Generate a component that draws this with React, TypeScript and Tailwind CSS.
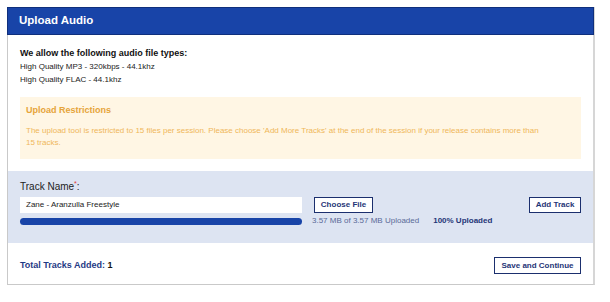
import React from "react";

export default function App() {
  const font = { fontFamily: '"Liberation Sans", Arial, sans-serif' };
  return (
    <div className="w-[610px] h-[302px] bg-white overflow-hidden" style={font}>
      <div className="ml-[7px] mt-[7px] w-[588px] border border-[#c9c9c9] border-t-0 border-r-2 border-r-[#d6d6d6]">
        <div className="h-[28px] bg-[#1844a8] border border-[#0f2f7c] -mx-px flex items-center px-[11px]">
          <span className="text-white font-bold text-[11.5px] leading-none">Upload Audio</span>
        </div>
        <div className="px-[12px] pt-[11px] pb-[12px]">
          <div className="text-[9px] font-bold leading-[14px] text-[#111]">We allow the following audio file types:</div>
          <div className="text-[8px] leading-[13px] text-[#222]">High Quality MP3 - 320kbps - 44.1khz</div>
          <div className="text-[8px] leading-[13px] text-[#222]">High Quality FLAC - 44.1khz</div>
          <div className="mt-[11px] bg-[#fff6e4] px-[6px] pt-[6px] pb-[10px]">
            <div className="text-[9px] font-bold leading-[14px] text-[#e6a43a]">Upload Restrictions</div>
            <div className="mt-[8px] text-[8px] leading-[12px] text-[#efb65a] whitespace-nowrap">
              The upload tool is restricted to 15 files per session. Please choose 'Add More Tracks' at the end of the session if your release contains more than
              <br />
              15 tracks.
            </div>
          </div>
        </div>
        <div className="bg-[#dde4f2] px-[12px] pt-[9px] pb-[16px]">
          <div className="text-[10px] leading-[14px] text-[#222]">
            Track Name<span className="text-[#e03a3a] text-[7px] align-top leading-none">*</span>:
          </div>
          <div className="mt-[3px] flex items-center">
            <div className="w-[282px] h-[16px] bg-white flex items-center px-[6px] text-[8px] text-[#222]">
              Zane - Aranzulla Freestyle
            </div>
            <div className="ml-[12px] h-[16px] w-[59px] border border-[#1b2f6e] bg-white flex items-center justify-center text-[8px] font-bold text-[#1f3577]">
              Choose File
            </div>
            <div className="ml-auto h-[16px] w-[52px] border border-[#1b2f6e] bg-white flex items-center justify-center text-[8px] font-bold text-[#1f3577]">
              Add Track
            </div>
          </div>
          <div className="mt-[2px] flex items-center">
            <div className="w-[282px] h-[7px] rounded-full bg-[#1844a8]" />
            <div className="ml-[10px] text-[8px] leading-[12px] text-[#5a6a98] whitespace-nowrap">3.57 MB of 3.57 MB Uploaded</div>
            <div className="ml-[14px] text-[8px] leading-[12px] font-bold text-[#1f3577] whitespace-nowrap">100% Uploaded</div>
          </div>
        </div>
        <div className="flex items-center justify-between px-[12px] pt-[14px] pb-[10px]">
          <div className="text-[9px] font-bold text-[#1f3a85]">
            Total Tracks Added: <span className="text-[#111]">1</span>
          </div>
          <div className="h-[17px] w-[87px] border border-[#1b2f6e] bg-white flex items-center justify-center text-[8px] font-bold text-[#1f3577]">
            Save and Continue
          </div>
        </div>
      </div>
    </div>
  );
}
